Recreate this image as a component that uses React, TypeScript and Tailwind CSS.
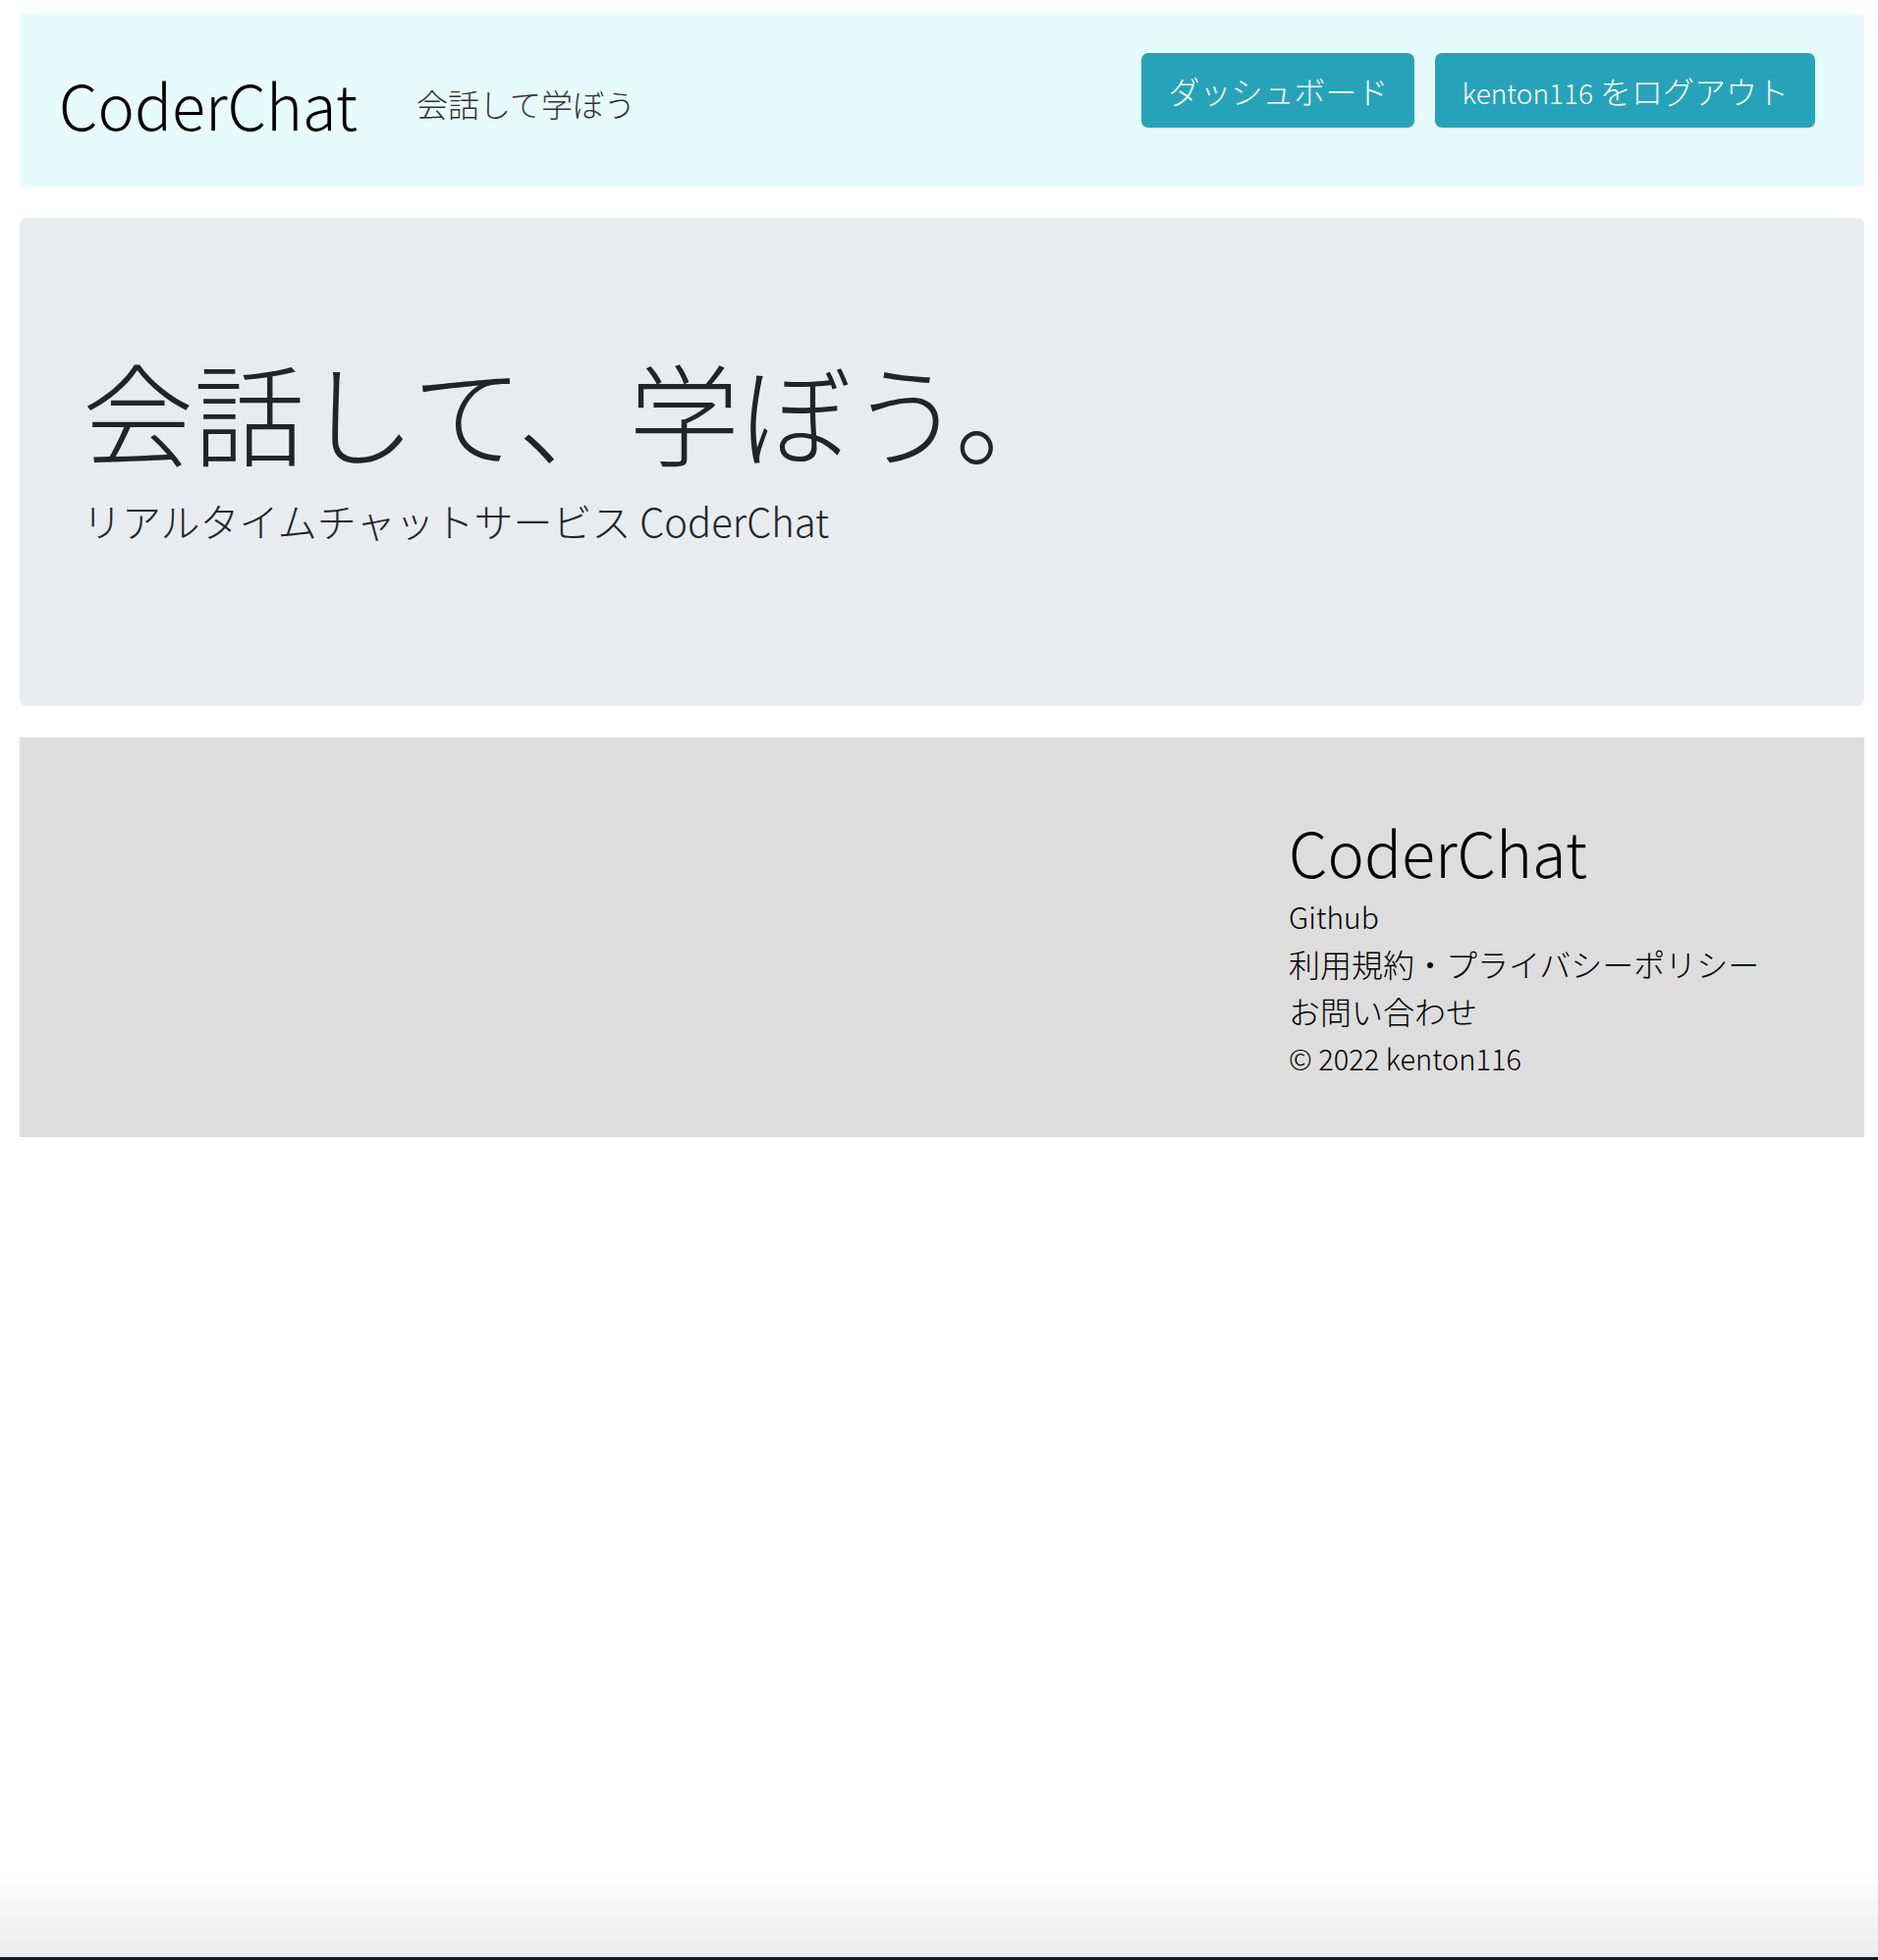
export default function App() {
  return (
    <div className="min-h-[1996px] flex flex-col bg-white text-[#212529] font-['Noto_Sans_CJK_JP',sans-serif] font-light">
      <header className="mt-[14px] ml-[20px] mr-[14px] h-[176px] bg-[#e7fbfd] flex items-center justify-between pl-[40px] pr-[50px]">
        <div className="flex items-center gap-[60px] pt-[8px]">
          <a className="text-[63px] leading-[76px] text-black">CoderChat</a>
          <a className="text-[32px] leading-[44px] text-[#333] pb-[2px]">会話して学ぼう</a>
        </div>
        <div className="flex items-center gap-[21px] pb-[20px]">
          <button className="h-[76px] px-[27px] rounded-[7px] bg-[#27a3b9] text-white text-[32px]">
            ダッシュボード
          </button>
          <button className="h-[76px] px-[27px] rounded-[7px] bg-[#27a3b9] text-white text-[32px]">
            <span className="text-[28px]">kenton116</span> をログアウト
          </button>
        </div>
      </header>

      <section className="mt-[32px] ml-[20px] mr-[14px] rounded-[7px] bg-[#e9ecef] pt-[128px] pb-[160px] px-[64px]">
        <h1 className="text-[113px] leading-[134px] font-light">会話して、学ぼう。</h1>
        <p className="mt-[17px] text-[40px] leading-[58px]">リアルタイムチャットサービス CoderChat</p>
      </section>

      <footer className="mt-[32px] ml-[20px] mr-[14px] bg-[#dddddd] pt-[78px] pb-[57px] grid grid-cols-[1292px_1fr]">
        <div />
        <div className="flex flex-col">
          <div className="text-[63px] leading-[76px] text-black">CoderChat</div>
          <div className="mt-[4px] flex flex-col text-[32px] leading-[48px] text-black">
            <a className="text-[30px]">Github</a>
            <a>利用規約・プライバシーポリシー</a>
            <a>お問い合わせ</a>
            <span className="text-[29px]">© 2022 kenton116</span>
          </div>
        </div>
      </footer>

      <div className="flex-1" />
      <div className="h-[90px] bg-gradient-to-b from-white to-[#ececec]" />
      <div className="h-[3px] bg-[#0f1c26]" />
    </div>
  );
}
